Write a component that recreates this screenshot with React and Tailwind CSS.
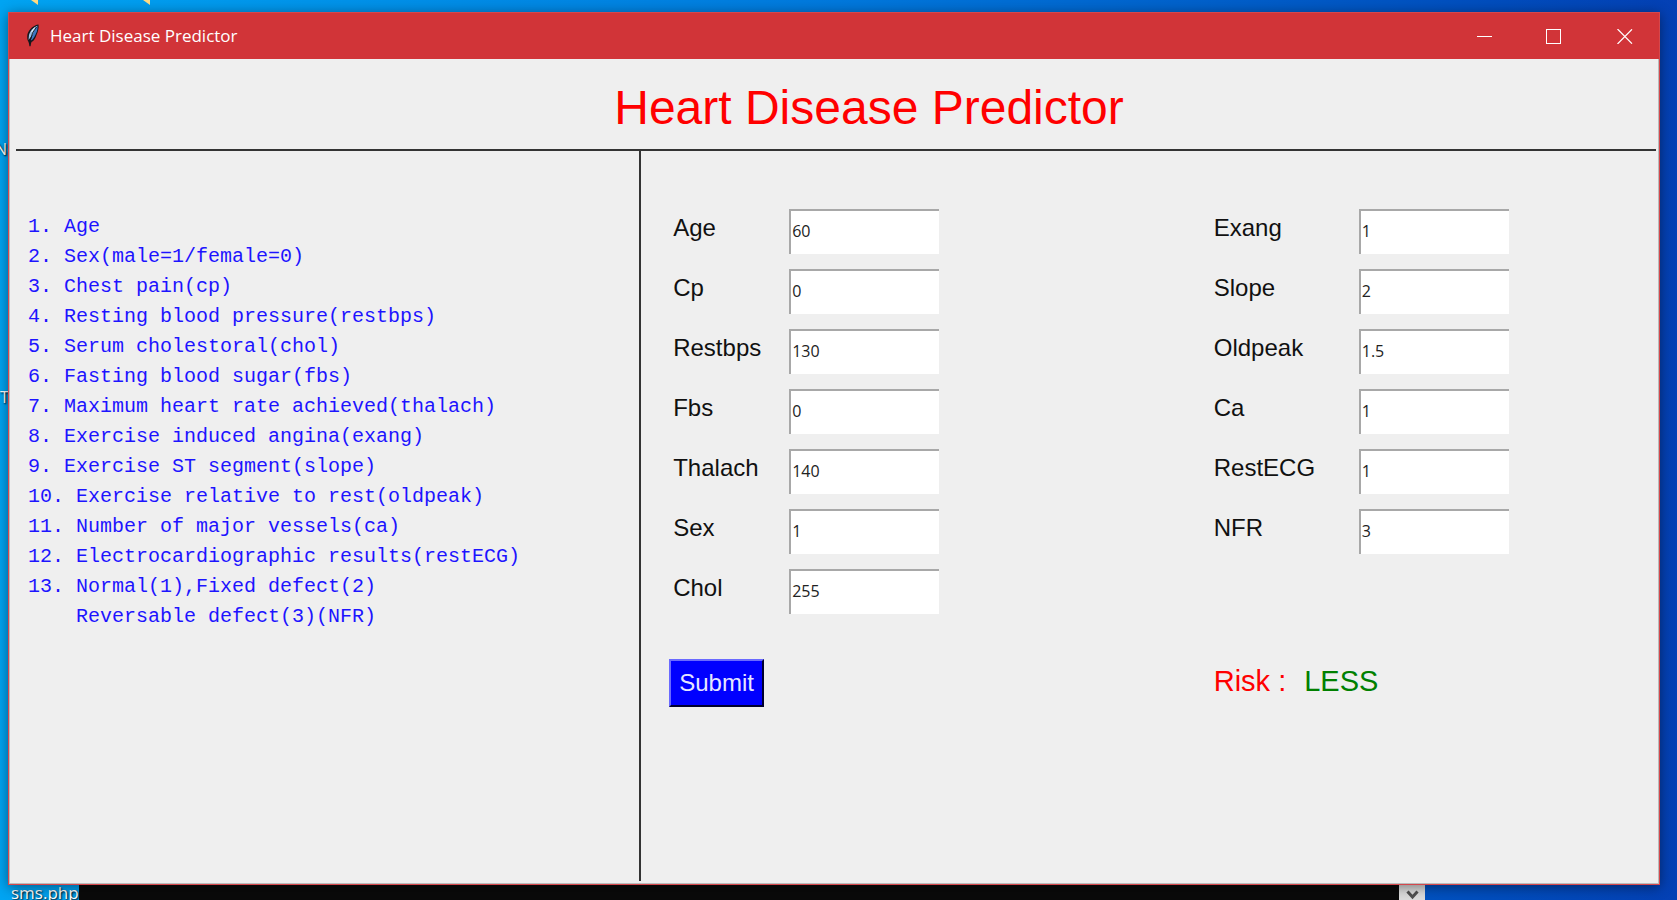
const legend = [
  '1. Age',
  '2. Sex(male=1/female=0)',
  '3. Chest pain(cp)',
  '4. Resting blood pressure(restbps)',
  '5. Serum cholestoral(chol)',
  '6. Fasting blood sugar(fbs)',
  '7. Maximum heart rate achieved(thalach)',
  '8. Exercise induced angina(exang)',
  '9. Exercise ST segment(slope)',
  '10. Exercise relative to rest(oldpeak)',
  '11. Number of major vessels(ca)',
  '12. Electrocardiographic results(restECG)',
  '13. Normal(1),Fixed defect(2)',
  '    Reversable defect(3)(NFR)',
];

const leftFields = [
  ['Age', '60'],
  ['Cp', '0'],
  ['Restbps', '130'],
  ['Fbs', '0'],
  ['Thalach', '140'],
  ['Sex', '1'],
  ['Chol', '255'],
];

const rightFields = [
  ['Exang', '1'],
  ['Slope', '2'],
  ['Oldpeak', '1.5'],
  ['Ca', '1'],
  ['RestECG', '1'],
  ['NFR', '3'],
];

function Field({ label, value, labelWidth }) {
  const id = label.toLowerCase();
  return (
    <div className="flex">
      <label htmlFor={id} className={`${labelWidth} shrink-0 pt-[3px] text-2xl leading-8 text-[#111]`}>
        {label}
      </label>
      <input
        id={id}
        type="text"
        defaultValue={value}
        className="h-[45px] w-[150px] border-t-2 border-l-2 border-[#a8a8a8] border-r-white border-b-white bg-white pb-1 pl-px font-['Open_Sans',sans-serif] text-base text-[#222] outline-none"
      />
    </div>
  );
}

function Feather() {
  return (
    <svg width="14" height="24" viewBox="0 0 14 24" aria-hidden="true">
      <path d="M12.5 0.5C8 1 3 5 1.5 10C1 13 1 16 2.5 18L4 23L5.5 18C8 17 9.500 14 10.500 11C12 7.500 13 4 12.500 0.500Z" fill="#15161c" />
      <path d="M11.500 1.800C8 3 4 7 3 11L2.500 16L7 10Z" fill="#9cc3e8" />
      <path d="M11.500 2C12 6 9.500 12 6 16L4.500 16.500L7.500 8.500Z" fill="#3d78c4" />
      <path d="M10.500 3L6.500 9L4 17.500V22" fill="none" stroke="#15161c" strokeWidth="0.900" />
      <path d="M8.500 3.500L5.500 8" fill="none" stroke="#e8f3fc" strokeWidth="1" />
    </svg>
  );
}

function TitleBar() {
  return (
    <header className="flex h-[46px] shrink-0 items-center justify-between bg-[#d13438] pr-[26px] pl-[17px] text-white">
      <div className="flex items-center gap-[10px]">
        <Feather />
        <span className="font-['Open_Sans',sans-serif] text-[17px] leading-6">Heart Disease Predictor</span>
      </div>
      <div className="flex items-center gap-[54px]">
        <button type="button" aria-label="Minimize">
          <svg className="block" width="16" height="15" shapeRendering="crispEdges">
            <path d="M1 7.500H16" stroke="#fff" />
          </svg>
        </button>
        <button type="button" aria-label="Maximize">
          <svg className="block" width="16" height="15" shapeRendering="crispEdges">
            <rect x="0.500" y="0.500" width="14" height="14" fill="none" stroke="#fff" />
          </svg>
        </button>
        <button type="button" aria-label="Close">
          <svg className="block" width="17" height="15">
            <path d="M1.500 0L16 14.700M16 0.300L1.500 15" stroke="#fff" strokeWidth="1.200" />
          </svg>
        </button>
      </div>
    </header>
  );
}

function Desktop() {
  return (
    <div aria-hidden="true">
      <svg className="absolute top-0 left-[31px]" width="7" height="5">
        <path d="M0 0H7V5Z" fill="#ffdc84" />
      </svg>
      <svg className="absolute top-0 left-[143px]" width="7" height="5">
        <path d="M0 0H7V5Z" fill="#ffdc84" />
      </svg>
      <span className="absolute top-[137px] left-[-5px] font-['Open_Sans',sans-serif] text-base text-white text-shadow-[1px_1px_2px_#000]">No</span>
      <span className="absolute top-[385px] left-0 font-['Open_Sans',sans-serif] text-base text-white text-shadow-[1px_1px_2px_#000]">To</span>
    </div>
  );
}

export default function App() {
  return (
    <div className="relative flex h-screen flex-col overflow-hidden bg-linear-to-r from-[#00a4f2] via-[#0078dc] to-[#0440b4] pt-3 font-['Liberation_Sans',Arial,sans-serif]">
      <Desktop />
      <div className="relative z-10 mr-[17px] ml-2 flex min-h-0 flex-1 flex-col border border-[#d5474c] bg-[#efefef] shadow-[0_2px_12px_rgba(0,0,0,0.45)]">
        <TitleBar />
        <div className="flex min-h-0 flex-1 flex-col border-x border-b border-[#b9bcbc] pr-[2px] pb-[2px] pl-[6px]">
          <h1 className="border-b-2 border-[#333] pt-[23px] pb-[15px] pl-[66px] text-center text-5xl leading-[52px] text-[#f00]">
            Heart Disease Predictor
          </h1>
          <main className="flex min-h-0 flex-1">
            <section className="w-[38%] shrink-0 pt-[61px] pl-3">
              <ul className="font-['Liberation_Mono',monospace] text-xl leading-[30px] whitespace-pre text-[#1d14ff]">
                {legend.map((line) => (
                  <li key={line}>{line}</li>
                ))}
              </ul>
            </section>
            <form className="flex-1 border-l-2 border-[#333] pt-[58px] pl-8" onSubmit={(e) => e.preventDefault()}>
              <div className="grid grid-cols-[55%_45%]">
                <div className="flex flex-col gap-[15px]">
                  {leftFields.map(([label, value]) => (
                    <Field key={label} label={label} value={value} labelWidth="w-[116px]" />
                  ))}
                </div>
                <div className="flex flex-col gap-[15px]">
                  {rightFields.map(([label, value]) => (
                    <Field key={label} label={label} value={value} labelWidth="w-[145px]" />
                  ))}
                </div>
              </div>
              <div className="grid grid-cols-[55%_45%] pt-[45px]">
                <div className="-ml-1">
                  <button
                    type="submit"
                    className="h-12 border-2 border-t-[#6a6aff] border-r-[#000030] border-b-[#000030] border-l-[#6a6aff] bg-[#00f] px-2 text-2xl leading-8 text-[#e6e6ff]"
                  >
                    Submit
                  </button>
                </div>
                <output className="flex gap-[18px] pt-1 text-[29px] leading-9 text-[#f00]">
                  <span>Risk :</span>
                  <span className="text-[#008000]">LESS</span>
                </output>
              </div>
            </form>
          </main>
        </div>
      </div>
      <div className="flex h-[15px] shrink-0 overflow-hidden" aria-hidden="true">
        <div className="w-[79px] pl-[11px] font-['Open_Sans',sans-serif] text-[17px] leading-4 text-white text-shadow-[1px_1px_2px_#000]">
          sms.php
        </div>
        <div className="w-[1320px] bg-[#0a0a0a]" />
        <div className="flex w-[26px] justify-center bg-[#dcdcdc] pt-[5px]">
          <svg width="13" height="10">
            <path d="M1.500 1.500L6.500 7L11.500 1.500" fill="none" stroke="#505050" strokeWidth="3" />
          </svg>
        </div>
      </div>
    </div>
  );
}
